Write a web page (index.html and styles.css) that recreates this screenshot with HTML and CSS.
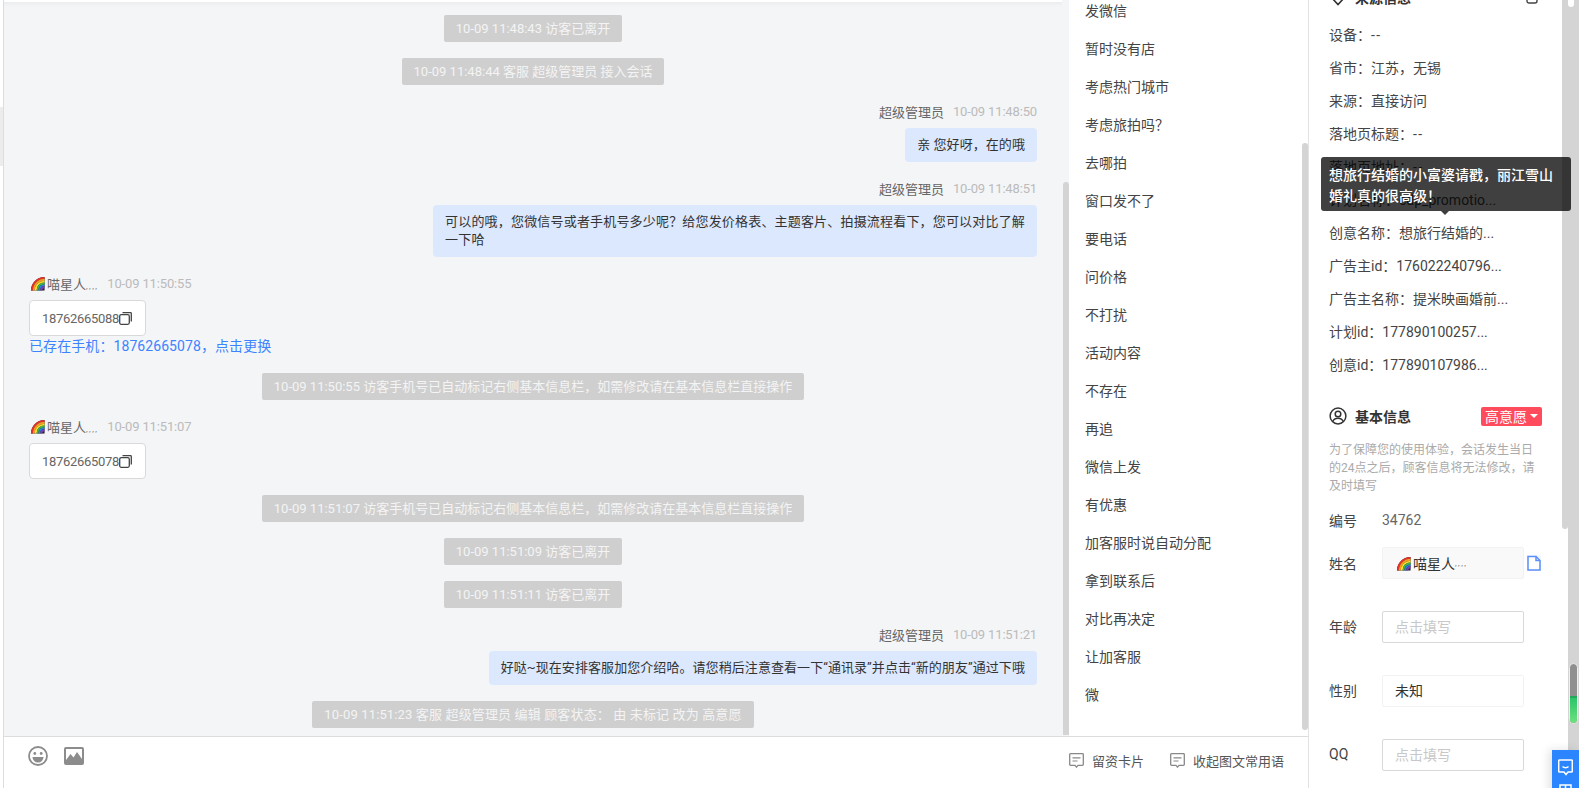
FILE: index.html
```html
<!DOCTYPE html>
<html lang="en">
<head>
    <meta charset="UTF-8">
    <meta name="viewport" content="width=device-width, initial-scale=1.0">
    <title>会话详情</title>
    <link rel="stylesheet" href="styles.css">
</head>
<body>
    <svg class="defs">
        <defs>
            <symbol id="rainbow" viewBox="0 0 16 16">
                <path d="M1 15.500C1 7.500 7.500 1 15.500 1v14.500z" fill="#222"/>
                <path d="M2 15.500C2 8 8 2 15.500 2" fill="none" stroke="#e8302a" stroke-width="2"/>
                <path d="M4 15.500C4 9 9 4 15.500 4" fill="none" stroke="#f59a23" stroke-width="2"/>
                <path d="M6 15.500C6 10 10 6 15.500 6" fill="none" stroke="#f7df2e" stroke-width="2"/>
                <path d="M8 15.500C8 11 11 8 15.500 8" fill="none" stroke="#3fb54a" stroke-width="2"/>
                <path d="M10 15.500C10 12 12 10 15.500 10" fill="none" stroke="#2f7de1" stroke-width="2"/>
                <path d="M12 15.500C12 13.500 13.500 12 15.500 12" fill="none" stroke="#7b3fb5" stroke-width="2"/>
            </symbol>
            <symbol id="copy" viewBox="0 0 13 13">
                <rect x="0.700" y="2.700" width="9.600" height="9.600" rx="1.500" fill="none" stroke="#444" stroke-width="1.300"/>
                <path d="M3.500 0.700h8a.8.8 0 0 1 .8.8v8" fill="none" stroke="#444" stroke-width="1.300"/>
            </symbol>
            <symbol id="comment" viewBox="0 0 15 15">
                <path d="M1.500 0.700h12a.8.8 0 0 1 .8.8v10a.8.8 0 0 1-.8.8H9l-1.500 1.800L6 12.300H1.500a.8.8 0 0 1-.8-.8v-10a.8.8 0 0 1 .8-.8z" fill="none" stroke="#888" stroke-width="1.300"/>
                <path d="M3.500 4.800h8M3.500 8h5" fill="none" stroke="#888" stroke-width="1.200"/>
            </symbol>
        </defs>
    </svg>

    <div class="app">
        <div class="rail"><div class="rail-mark"></div></div>

        <div class="workspace">
            <div class="columns">
                <div class="chat">
                    <div class="sys">10-09 11:48:43 访客已离开</div>
                    <div class="sys">10-09 11:48:44 客服 超级管理员 接入会话</div>

                    <div class="msg msg-right">
                        <div class="meta"><span class="meta-name">超级管理员</span><span class="meta-time">10-09 11:48:50</span></div>
                        <div class="bubble">亲 您好呀，在的哦</div>
                    </div>
                    <div class="msg msg-right">
                        <div class="meta"><span class="meta-name">超级管理员</span><span class="meta-time">10-09 11:48:51</span></div>
                        <div class="bubble bubble-wide">可以的哦，您微信号或者手机号多少呢？给您发价格表、主题客片、拍摄流程看下，您可以对比了解<br>一下哈</div>
                    </div>

                    <div class="msg">
                        <div class="meta">
                            <svg class="rainbow"><use href="#rainbow"/></svg><span class="meta-name">喵星人<span class="dots">,,,,</span></span><span class="meta-time">10-09 11:50:55</span>
                        </div>
                        <div class="phone-card">18762665088<svg class="copy-icon"><use href="#copy"/></svg></div>
                        <div class="phone-link">已存在手机：18762665078，点击更换</div>
                    </div>

                    <div class="sys">10-09 11:50:55 访客手机号已自动标记右侧基本信息栏，如需修改请在基本信息栏直接操作</div>

                    <div class="msg">
                        <div class="meta">
                            <svg class="rainbow"><use href="#rainbow"/></svg><span class="meta-name">喵星人<span class="dots">,,,,</span></span><span class="meta-time">10-09 11:51:07</span>
                        </div>
                        <div class="phone-card">18762665078<svg class="copy-icon"><use href="#copy"/></svg></div>
                    </div>

                    <div class="sys">10-09 11:51:07 访客手机号已自动标记右侧基本信息栏，如需修改请在基本信息栏直接操作</div>
                    <div class="sys">10-09 11:51:09 访客已离开</div>
                    <div class="sys">10-09 11:51:11 访客已离开</div>

                    <div class="msg msg-right">
                        <div class="meta"><span class="meta-name">超级管理员</span><span class="meta-time">10-09 11:51:21</span></div>
                        <div class="bubble">好哒~现在安排客服加您介绍哈。请您稍后注意查看一下“通讯录”并点击“新的朋友”通过下哦</div>
                    </div>

                    <div class="sys sys-wide">10-09 11:51:23 客服 超级管理员 编辑 顾客状态： 由 未标记 改为 高意愿</div>

                    <div class="scroll-thumb chat-thumb"></div>
                </div>

                <div class="phrases">
                    <div class="phrase">发微信</div>
                    <div class="phrase">暂时没有店</div>
                    <div class="phrase">考虑热门城市</div>
                    <div class="phrase">考虑旅拍吗？</div>
                    <div class="phrase">去哪拍</div>
                    <div class="phrase">窗口发不了</div>
                    <div class="phrase">要电话</div>
                    <div class="phrase">问价格</div>
                    <div class="phrase">不打扰</div>
                    <div class="phrase">活动内容</div>
                    <div class="phrase">不存在</div>
                    <div class="phrase">再追</div>
                    <div class="phrase">微信上发</div>
                    <div class="phrase">有优惠</div>
                    <div class="phrase">加客服时说自动分配</div>
                    <div class="phrase">拿到联系后</div>
                    <div class="phrase">对比再决定</div>
                    <div class="phrase">让加客服</div>
                    <div class="phrase">微</div>

                    <div class="scroll-thumb phrases-thumb"></div>
                </div>
            </div>

            <div class="editor">
                <div class="toolbar">
                    <div class="tools">
                        <svg class="tool-icon" viewBox="0 0 20 20">
                            <circle cx="10" cy="10" r="9" fill="none" stroke="#8c8c8c" stroke-width="1.800"/>
                            <circle cx="6.800" cy="7.500" r="1.400" fill="#8c8c8c"/>
                            <circle cx="13.200" cy="7.500" r="1.400" fill="#8c8c8c"/>
                            <path d="M4.500 11h11a5.500 5.500 0 0 1-11 0z" fill="#8c8c8c"/>
                        </svg>
                        <svg class="tool-icon" viewBox="0 0 20 20">
                            <rect x="0" y="1" width="20" height="18" rx="2" fill="#8c8c8c"/>
                            <path d="M2 14l4.500-6 3 3.500L13 6l5 7V3H2z" fill="#fff"/>
                        </svg>
                    </div>
                    <div class="actions">
                        <div class="action"><svg class="action-icon"><use href="#comment"/></svg>留资卡片</div>
                        <div class="action"><svg class="action-icon"><use href="#comment"/></svg>收起图文常用语</div>
                    </div>
                </div>
                <div class="editor-hint">按Enter发送消息，按Ctrl+Enter换行，可以直接粘贴图片发送</div>
            </div>
        </div>

        <div class="panel">
            <div class="panel-head source-head">
                <div class="panel-title">
                    <svg class="title-icon" viewBox="0 0 18 18"><path d="M9 1.500L16 9l-7 7.500L2 9z" fill="none" stroke="#333" stroke-width="1.600"/></svg>
                    来源信息
                </div>
                <svg class="head-tool" viewBox="0 0 12 14"><rect x="1" y="1" width="10" height="12" rx="2" fill="none" stroke="#444" stroke-width="1.400"/></svg>
            </div>
            <div class="source-row">设备：<span class="dash">--</span></div>
            <div class="source-row">省市：江苏，无锡</div>
            <div class="source-row">来源：直接访问</div>
            <div class="source-row">落地页标题：<span class="dash">--</span></div>
            <div class="source-row">落地页地址：<span class="dash">--</span></div>
            <div class="source-row">计划名称：cdp_promotio...</div>
            <div class="source-row">创意名称：想旅行结婚的...</div>
            <div class="source-row">广告主id：176022240796...</div>
            <div class="source-row">广告主名称：提米映画婚前...</div>
            <div class="source-row">计划id：177890100257...</div>
            <div class="source-row">创意id：177890107986...</div>

            <div class="panel-head basic-head">
                <div class="panel-title">
                    <svg class="title-icon" viewBox="0 0 18 18">
                        <circle cx="9" cy="9" r="7.900" fill="none" stroke="#333" stroke-width="1.500"/>
                        <circle cx="9" cy="7" r="2.800" fill="none" stroke="#333" stroke-width="1.500"/>
                        <path d="M3.800 14.500c.8-2.300 2.800-3.300 5.200-3.300s4.400 1 5.200 3.300" fill="none" stroke="#333" stroke-width="1.500"/>
                    </svg>
                    基本信息
                </div>
                <div class="tag">高意愿<span class="tag-caret"></span></div>
            </div>
            <div class="hint">为了保障您的使用体验，会话发生当日的24点之后，顾客信息将无法修改，请及时填写</div>
            <div class="id-row"><span class="field-label">编号</span><span class="id-value">34762</span></div>

            <div class="fields">
                <div class="field">
                    <span class="field-label">姓名</span>
                    <div class="box box-readonly"><svg class="rainbow"><use href="#rainbow"/></svg>喵星人<span class="dots">,,,,</span></div>
                    <svg class="name-copy" viewBox="0 0 14 16">
                        <rect width="14" height="16" fill="#f3f7ff"/>
                        <path d="M1 1.500h8l4 4v9.500H1z" fill="#fff" stroke="#5b8ff9" stroke-width="1.500"/>
                        <path d="M9 1.500v4h4" fill="none" stroke="#5b8ff9" stroke-width="1.500"/>
                    </svg>
                </div>
                <div class="field"><span class="field-label">年龄</span><div class="box box-input">点击填写</div></div>
                <div class="field"><span class="field-label">性别</span><div class="box box-plain">未知</div></div>
                <div class="field"><span class="field-label">QQ</span><div class="box box-input">点击填写</div></div>
            </div>

            <div class="scroll-thumb panel-thumb"></div>
        </div>

        <div class="page-scroll">
            <div class="page-notch"></div>
            <div class="page-thumb"><div class="page-thumb-fill"></div></div>
        </div>

        <div class="tooltip">想旅行结婚的小富婆请戳，丽江雪山婚礼真的很高级！</div>

        <div class="float-btn">
            <svg class="float-icon" viewBox="0 0 15 17">
                <path d="M1.500 1h12a.8.8 0 0 1 .8.8v10.400a.8.8 0 0 1-.8.8H10l-2 2.500L6 13H1.500a.8.8 0 0 1-.8-.8V1.800a.8.8 0 0 1 .8-.8z" fill="none" stroke="#fff" stroke-width="1.500"/>
                <path d="M4.500 7.500c1.500 1.500 4.500 1.500 6 0" fill="none" stroke="#fff" stroke-width="1.500"/>
            </svg>
            <svg class="float-icon" viewBox="0 0 15 17">
                <rect x="2" y="1" width="11" height="11" fill="none" stroke="#fff" stroke-width="1.500"/>
                <path d="M7.500 1v11M2 6.500h11" stroke="#fff" stroke-width="1.500"/>
            </svg>
        </div>
    </div>
</body>
</html>
```

FILE: styles.css
```css
html, body {
    margin: 0;
    height: 100%;
    overflow: hidden;
}

body {
    font-family: Roboto, 'Noto Sans CJK SC', sans-serif;
    font-size: 13px;
    color: #333;
    background-color: #fff;
}

.defs {
    display: none;
}

.app {
    position: relative;
    display: flex;
    width: 1579px;
    height: 788px;
    overflow: hidden;
}

.rail {
    width: 3px;
    padding-top: 107px;
    flex-shrink: 0;
}

.rail-mark {
    height: 59px;
    background-color: #ececec;
}

.workspace {
    display: flex;
    flex-direction: column;
    width: 1304px;
    flex-shrink: 0;
    border-left: 1px solid #ddd;
    border-right: 1px solid #e2e2e2;
}

.columns {
    display: flex;
    height: 736px;
}

/* chat column */
.chat {
    position: relative;
    display: flex;
    flex-direction: column;
    gap: 16px;
    width: 1058px;
    padding: 13px 25px 0;
    margin-right: 7px;
    box-sizing: border-box;
    flex-shrink: 0;
    background-color: #f4f5f7;
    border-top: 2px solid #fff;
    box-shadow: 7px 0 0 #f4f5f7, inset 0 6px 6px -6px rgba(0, 0, 0, 0.08);
}

.sys {
    align-self: center;
    height: 27px;
    line-height: 27px;
    padding: 0 12px;
    border-radius: 2px;
    background-color: #cfcfcf;
    color: #f4f4f4;
    white-space: nowrap;
}

.sys-wide {
    letter-spacing: 0.14px;
}

.msg {
    display: flex;
    flex-direction: column;
    align-items: flex-start;
}

.msg-right {
    align-items: flex-end;
}

.meta {
    display: flex;
    align-items: center;
    height: 21px;
    margin-bottom: 6px;
}

.meta-name {
    color: #666;
}

.meta-time {
    margin-left: 9px;
    color: #bbb;
    letter-spacing: -0.15px;
}

.dots {
    font-size: 8px;
    letter-spacing: 1.500px;
    color: #666;
}

.rainbow {
    width: 15px;
    height: 15px;
    margin: 0 2px 0 1px;
    flex-shrink: 0;
}

.bubble {
    padding: 8px 12px;
    line-height: 18px;
    border-radius: 4px;
    background-color: #dce8fd;
    color: #333;
    letter-spacing: 0.07px;
}

.bubble-wide {
    letter-spacing: 0.18px;
}

.phone-card {
    display: flex;
    align-items: center;
    height: 36px;
    padding: 0 13px 0 12px;
    box-sizing: border-box;
    border: 1px solid #d9d9d9;
    border-radius: 4px;
    background-color: #fff;
    color: #666;
    letter-spacing: -0.3px;
}

.copy-icon {
    width: 13px;
    height: 13px;
}

.phone-link {
    height: 21px;
    line-height: 21px;
    font-size: 14px;
    color: #3c83ff;
    letter-spacing: 0.08px;
}

.scroll-thumb {
    position: absolute;
    width: 6px;
    border-radius: 3px 3px 0 0;
    background-color: #d4d4d4;
}

.chat-thumb {
    top: 180px;
    right: -7px;
    height: 553px;
}

/* phrases column */
.phrases {
    position: relative;
    width: 239px;
    flex-shrink: 0;
    padding: 0 16px;
    box-sizing: border-box;
    background-color: #fff;
}

.phrase {
    height: 38px;
    line-height: 38px;
    font-size: 14px;
    color: #444;
}

.phrase:first-child {
    margin-top: -8px;
}

.phrases-thumb {
    top: 143px;
    right: 0;
    height: 587px;
    border-radius: 3px;
}

/* editor */
.editor {
    flex: 1;
    border-top: 1px solid #ddd;
    overflow: hidden;
}

.toolbar {
    display: flex;
    justify-content: space-between;
    align-items: flex-start;
    height: 20px;
    padding: 9px 24px 0 24px;
}

.tools {
    display: flex;
    gap: 16px;
}

.tool-icon {
    width: 20px;
    height: 20px;
}

.actions {
    display: flex;
    gap: 26px;
    padding-top: 5px;
    color: #555;
}

.action {
    display: flex;
    align-items: center;
    gap: 8px;
}

.action-icon {
    width: 15px;
    height: 15px;
}

.editor-hint {
    margin-top: 22px;
    padding-left: 24px;
    color: #bbb;
}

/* info panel */
.panel {
    position: relative;
    width: 259px;
    flex-shrink: 0;
    padding: 0 26px 0 20px;
    box-sizing: border-box;
    background-color: #fff;
    font-size: 14px;
    overflow: hidden;
}

.panel-head {
    display: flex;
    justify-content: space-between;
    align-items: center;
    height: 20px;
}

.source-head {
    margin-top: -13px;
    margin-bottom: 12px;
}

.basic-head {
    margin-top: 24px;
}

.panel-title {
    display: flex;
    align-items: center;
    gap: 8px;
    font-weight: bold;
    color: #333;
}

.title-icon {
    width: 18px;
    height: 18px;
}

.head-tool {
    width: 12px;
    height: 14px;
    margin-right: 4px;
}

.source-row {
    height: 33px;
    line-height: 33px;
    white-space: nowrap;
    color: #444;
}

.dash {
    letter-spacing: 1.500px;
}

.tag {
    display: flex;
    align-items: center;
    gap: 3px;
    height: 19px;
    padding: 0 4px;
    border-radius: 2px;
    background-color: #ff4b5c;
    color: #fff;
}

.tag-caret {
    width: 0;
    height: 0;
    border-left: 4px solid transparent;
    border-right: 4px solid transparent;
    border-top: 4px solid #fff;
}

.hint {
    margin-top: 15px;
    font-size: 12px;
    line-height: 18px;
    color: #aaa;
}

.id-row {
    display: flex;
    align-items: center;
    height: 20px;
    margin-top: 15px;
}

.field-label {
    width: 53px;
    flex-shrink: 0;
    color: #444;
}

.id-value {
    color: #666;
}

.fields {
    display: flex;
    flex-direction: column;
    gap: 32px;
    margin-top: 17px;
}

.field {
    display: flex;
    align-items: center;
}

.field + .field .field-label,
.field + .field .box {
    padding-bottom: 2px;
}

.box {
    display: flex;
    align-items: center;
    width: 142px;
    height: 32px;
    padding: 0 12px;
    box-sizing: border-box;
    border: 1px solid #f2f2f2;
    border-radius: 2px;
    flex-shrink: 0;
    color: #333;
}

.box-readonly {
    background-color: #f9f9f9;
}

.box-input {
    border-color: #d9d9d9;
    color: #c8c8c8;
}

.name-copy {
    width: 14px;
    height: 16px;
    margin-left: 3px;
}

.panel-thumb {
    top: -10px;
    right: 0;
    height: 539px;
    border-radius: 0 0 3px 3px;
}

.page-scroll {
    position: relative;
    width: 11px;
    background-color: #d4d4d4;
    flex-shrink: 0;
}

.page-notch {
    position: absolute;
    top: -3px;
    left: 0;
    width: 6px;
    height: 10px;
    border-radius: 3px;
    background-color: #fff;
}

.page-thumb {
    position: absolute;
    top: 663px;
    left: 1px;
    width: 7px;
    height: 59px;
    border: 1px solid #eee;
    border-radius: 5px;
    background-color: #8f8f8f;
    overflow: hidden;
}

.page-thumb-fill {
    height: 27px;
    margin-top: 32px;
    border-top: 2px solid #22a85a;
    background: linear-gradient(#2cc46a, #72e47f);
}

/* overlays */
.tooltip {
    position: absolute;
    left: 1321px;
    top: 157px;
    width: 250px;
    height: 54px;
    padding: 8px 8px 0;
    box-sizing: border-box;
    border-radius: 3px;
    background-color: rgba(0, 0, 0, 0.75);
    color: #fff;
    font-size: 14px;
    font-weight: 500;
    line-height: 21px;
}

.tooltip::after {
    content: '';
    position: absolute;
    left: 120px;
    top: 54px;
    border-left: 4px solid transparent;
    border-right: 4px solid transparent;
    border-top: 4px solid #3d3d3d;
}

.float-btn {
    position: absolute;
    left: 1552px;
    top: 750px;
    display: flex;
    flex-direction: column;
    align-items: center;
    gap: 8px;
    width: 27px;
    height: 60px;
    padding-top: 9px;
    box-sizing: border-box;
    background-color: #2b85ff;
    box-shadow: -3px 0 10px rgba(0, 0, 0, 0.12);
}

.float-icon {
    width: 15px;
    height: 17px;
    flex-shrink: 0;
}
```
